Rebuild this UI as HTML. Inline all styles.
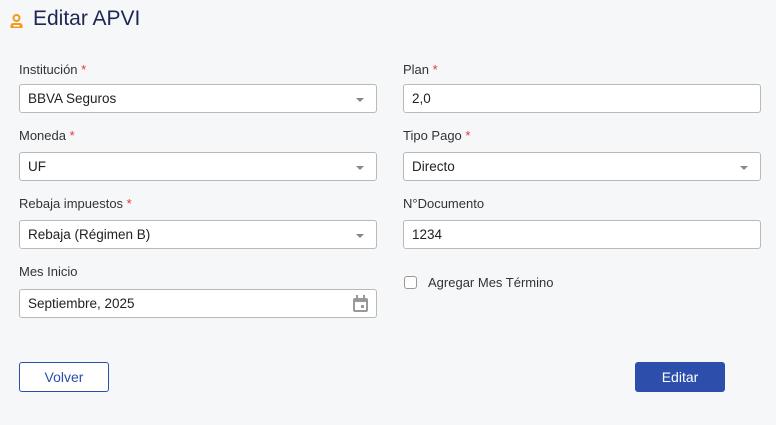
<!DOCTYPE html><html><head><style>
body{margin:0;width:776px;height:425px;background:#f6f7f9;font-family:"Liberation Sans",sans-serif;position:relative;overflow:hidden}
.a{position:absolute}
.t{left:33px;top:7px;font-size:21px;color:#1f2653}
.l{font-size:13px;color:#333}
.l b{color:#e0353a;font-weight:normal}
.i{height:29px;border:1px solid #b9b9b9;border-radius:3px;background:#fff;box-sizing:border-box;font-size:13.5px;color:#222;line-height:28px;padding-left:8px}
.w1{left:19px;width:358px}.w2{left:403px;width:358px}
.ar{position:absolute;right:12px;top:13px;width:0;height:0;border-left:4px solid transparent;border-right:4px solid transparent;border-top:4px solid #888}
.btn{top:362px;height:30px;width:90px;box-sizing:border-box;border-radius:3px;font-size:14px;text-align:center;line-height:28px}
</style></head><body>
<svg class="a" style="left:8px;top:13px" width="17" height="17" viewBox="0 0 16 17"><circle cx="8" cy="5" r="3" fill="none" stroke="#f39a1a" stroke-width="2"/><path d="M2 15v-2q0-3 3-3h6q3 0 3 3v2z" fill="#f39a1a"/><rect x="5" y="12" width="6" height="1.5" fill="#fff"/></svg>
<div class="a t">Editar APVI</div>
<div class="a l" style="left:19px;top:62px">Institución <b>*</b></div>
<div class="a i w1" style="top:84px">BBVA Seguros<span class="ar"></span></div>
<div class="a l" style="left:19px;top:128px">Moneda <b>*</b></div>
<div class="a i w1" style="top:152px">UF<span class="ar"></span></div>
<div class="a l" style="left:19px;top:196px">Rebaja impuestos <b>*</b></div>
<div class="a i w1" style="top:220px">Rebaja (Régimen B)<span class="ar"></span></div>
<div class="a l" style="left:19px;top:264px">Mes Inicio</div>
<div class="a i w1" style="top:289px">Septiembre, 2025
<svg style="position:absolute;right:7px;top:5px" width="17" height="18" viewBox="0 0 17 18"><rect x="1" y="3" width="15" height="14" rx="2" fill="#999"/><rect x="3" y="7" width="11" height="8" fill="#fff"/><rect x="4" y="0" width="2" height="4" fill="#999"/><rect x="11" y="0" width="2" height="4" fill="#999"/><rect x="9" y="10" width="3" height="3" fill="#999"/></svg></div>
<div class="a l" style="left:403px;top:62px">Plan <b>*</b></div>
<div class="a i w2" style="top:84px">2,0</div>
<div class="a l" style="left:403px;top:128px">Tipo Pago <b>*</b></div>
<div class="a i w2" style="top:152px">Directo<span class="ar"></span></div>
<div class="a l" style="left:403px;top:196px">N°Documento</div>
<div class="a i w2" style="top:220px">1234</div>
<div class="a" style="left:404px;top:276px;width:13px;height:13px;border:1px solid #999;border-radius:3px;box-sizing:border-box;background:#fff"></div>
<div class="a l" style="left:428px;top:275px">Agregar Mes Término</div>
<div class="a btn" style="left:19px;border:1px solid #2d4fab;color:#2d4fab;background:#fff">Volver</div>
<div class="a btn" style="left:635px;background:#2d4fab;color:#fff;border:1px solid #2d4fab">Editar</div>
</body></html>
